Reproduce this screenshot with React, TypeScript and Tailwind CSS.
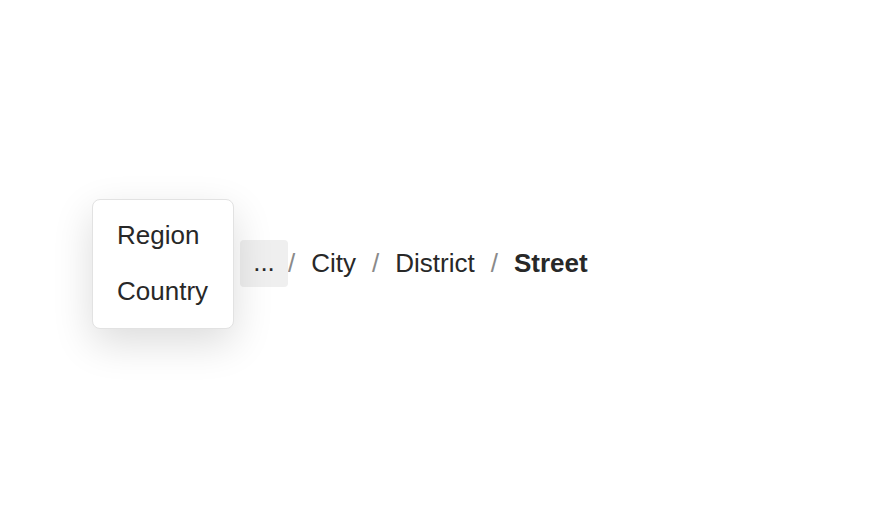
const crumbs = ["City", "District"];

const Separator = ({ first }: { first?: boolean }) => (
  <span className={first ? "mr-4 text-[#8a8a8a]" : "mx-4 text-[#8a8a8a]"}>/</span>
);

export default function App() {
  return (
    <div
      className="h-[528px] w-[880px] bg-white flex items-center pl-[240px] pb-[2px] text-[26px] text-[#282828]"
      style={{ fontFamily: '"Liberation Sans", Arial, sans-serif' }}
    >
      <nav className="flex items-center leading-none">
        <div className="relative">
          <div className="absolute right-full top-[calc(50%+1px)] -translate-y-1/2 mr-[6px] w-[142px] h-[130px] rounded-lg border border-[#e2e2e2] bg-white pt-[7px] pb-[9px] shadow-[0_14px_40px_rgba(0,0,0,0.14)]">
            <div className="h-14 flex items-center px-6">Region</div>
            <div className="h-14 flex items-center px-6">Country</div>
          </div>
          <button className="w-12 h-[47px] rounded bg-[#efefef] flex items-center justify-center text-[26px] text-[#282828] pb-[2px]">
            ...
          </button>
        </div>
        <Separator first />
        {crumbs.map((c) => (
          <span key={c} className="flex items-center">
            <span>{c}</span>
            <Separator />
          </span>
        ))}
        <span className="font-bold">Street</span>
      </nav>
    </div>
  );
}
